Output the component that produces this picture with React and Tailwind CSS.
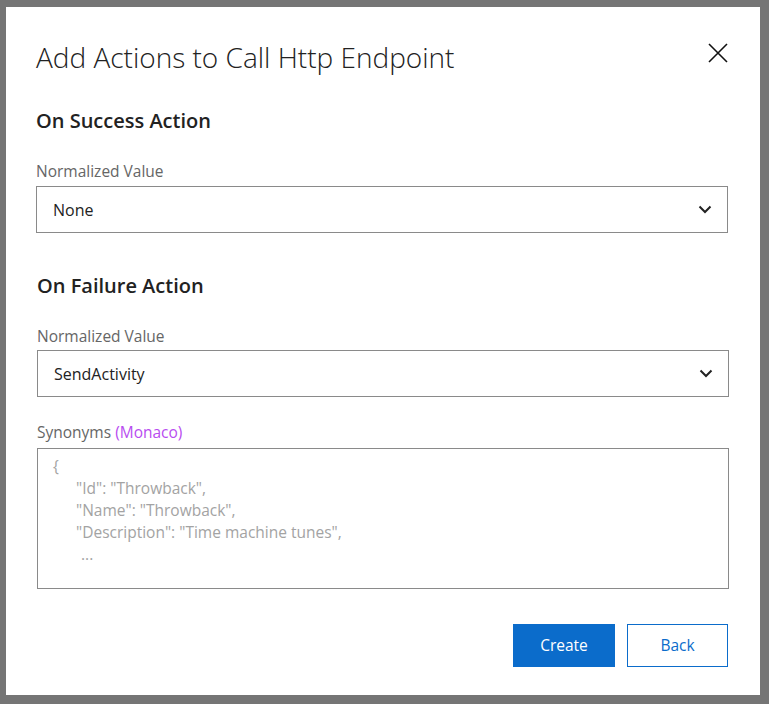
import React from 'react';

const Chevron = () => (
    <svg width="14" height="9" viewBox="0 0 14 9" fill="none">
        <path d="M1.5 1.5 L7 7 L12.5 1.5" stroke="#222" strokeWidth="2" />
    </svg>
);

const Select = ({ value, className = '' }) => (
    <div className={`h-[47px] border border-[#8a8a8a] flex items-center justify-between pl-[16px] pr-[15px] ${className}`}>
        <span className="text-[16px] text-[#222]">{value}</span>
        <Chevron />
    </div>
);

const App = () => {
    return (
        <div className="w-[769px] h-[704px] bg-[#757575] pt-[7px] pl-[6px]" style={{ fontFamily: '"Open Sans", "Noto Sans", sans-serif' }}>
            <div className="w-[754px] h-[688px] bg-white flex flex-col">
                <div className="flex items-start justify-between pl-[30px] pr-[32px] pt-[32px]">
                    <h1 className="text-[28px] font-light text-[#222] leading-[36px]">Add Actions to Call Http Endpoint</h1>
                    <svg width="20" height="20" viewBox="0 0 20 20" className="mt-[4px]">
                        <path d="M1 1 L19 19 M19 1 L1 19" stroke="#111" strokeWidth="1.6" />
                    </svg>
                </div>

                <div className="pl-[30px] pr-[32px]">
                    <h2 className="mt-[32px] text-[20px] font-semibold text-[#222] leading-[28px]">On Success Action</h2>
                    <div className="mt-[26px] text-[15.5px] text-[#666] leading-[20px]">Normalized Value</div>
                    <Select value="None" className="mt-[5px]" />
                </div>

                <div className="pl-[31px] pr-[31px]">
                    <h2 className="mt-[39px] text-[20px] font-semibold text-[#222] leading-[28px]">On Failure Action</h2>
                    <div className="mt-[26px] text-[15.5px] text-[#666] leading-[20px]">Normalized Value</div>
                    <Select value="SendActivity" className="mt-[4px]" />

                    <div className="mt-[25px] text-[15.5px] text-[#666] leading-[20px]">
                        Synonyms <span className="text-[#b84cf0]">(Monaco)</span>
                    </div>
                    <div className="mt-[6px] h-[141px] border border-[#8a8a8a] pl-[15px] pt-[6px] text-[15.5px] text-[#a3a3a3] leading-[22px]">
                        <div>{'{'}</div>
                        <div className="pl-[23px]">"Id": "Throwback",</div>
                        <div className="pl-[23px]">"Name": "Throwback",</div>
                        <div className="pl-[23px]">"Description": "Time machine tunes",</div>
                        <div className="pl-[28px]">...</div>
                    </div>
                </div>

                <div className="flex justify-end gap-[12px] pr-[32px] mt-[35px]">
                    <button className="w-[102px] h-[43px] bg-[#0b6ccb] text-white text-[15.5px]">Create</button>
                    <button className="w-[101px] h-[43px] border border-[#0b6ccb] text-[#0b6ccb] text-[15.5px]">Back</button>
                </div>
            </div>
        </div>
    );
};

export default App;
